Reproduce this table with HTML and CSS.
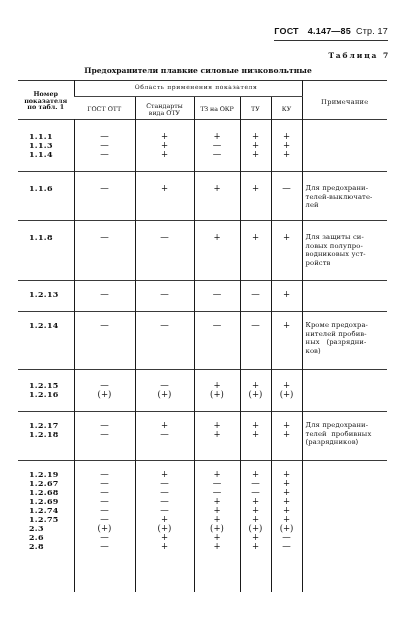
FILE: index.html
```html
<!DOCTYPE html>
<html lang="ru">
<head>
<meta charset="utf-8">
<title>ГОСТ 4.147—85 Стр. 17</title>
<link rel="stylesheet" href="styles.css">
</head>
<body>
<div class="page">
  <header class="running-head"><span class="head-text"><b>ГОСТ</b><b class="gost-no">4.147—85</b><span class="pg">Стр. 17</span></span></header>
  <div class="table-no">Таблица 7</div>
  <h1 class="caption">Предохранители плавкие силовые низковольтные</h1>
  <table class="spec">
    <colgroup>
      <col class="c-num"><col class="c-gost"><col class="c-std"><col class="c-tz"><col class="c-tu"><col class="c-ku"><col class="c-note">
    </colgroup>
    <thead>
      <tr class="hr1">
        <th rowspan="2" class="h-num">Номер<br>показателя<br>по табл. 1</th>
        <th colspan="5" class="h-area">Область применения показателя</th>
        <th rowspan="2" class="h-note">Примечание</th>
      </tr>
      <tr class="hr2">
        <th>ГОСТ ОТТ</th>
        <th>Стандарты<br>вида ОТУ</th>
        <th class="h-tz">ТЗ на ОКР</th>
        <th>ТУ</th>
        <th>КУ</th>
      </tr>
    </thead>
    <tbody>
      <tr class="r1">
        <td class="num">1.1.1<br>1.1.3<br>1.1.4</td>
        <td class="sym">—<br>—<br>—</td>
        <td class="sym">+<br>+<br>+</td>
        <td class="sym">+<br>—<br>—</td>
        <td class="sym">+<br>+<br>+</td>
        <td class="sym">+<br>+<br>+</td>
        <td class="note"></td>
      </tr>
      <tr class="r2">
        <td class="num">1.1.6</td>
        <td class="sym">—</td>
        <td class="sym">+</td>
        <td class="sym">+</td>
        <td class="sym">+</td>
        <td class="sym">—</td>
        <td class="note">Для предохрани-<br>телей-выключате-<br>лей</td>
      </tr>
      <tr class="r3">
        <td class="num">1.1.8</td>
        <td class="sym">—</td>
        <td class="sym">—</td>
        <td class="sym">+</td>
        <td class="sym">+</td>
        <td class="sym">+</td>
        <td class="note">Для защиты си-<br>ловых полупро-<br>водниковых уст-<br>ройств</td>
      </tr>
      <tr class="r4">
        <td class="num">1.2.13</td>
        <td class="sym">—</td>
        <td class="sym">—</td>
        <td class="sym">—</td>
        <td class="sym">—</td>
        <td class="sym">+</td>
        <td class="note"></td>
      </tr>
      <tr class="r5">
        <td class="num">1.2.14</td>
        <td class="sym">—</td>
        <td class="sym">—</td>
        <td class="sym">—</td>
        <td class="sym">—</td>
        <td class="sym">+</td>
        <td class="note">Кроме предохра-<br>нителей пробив-<br>ных&nbsp;&nbsp;&nbsp;(разрядни-<br>ков)</td>
      </tr>
      <tr class="r6">
        <td class="num">1.2.15<br>1.2.16</td>
        <td class="sym">—<br>(+)</td>
        <td class="sym">—<br>(+)</td>
        <td class="sym">+<br>(+)</td>
        <td class="sym">+<br>(+)</td>
        <td class="sym">+<br>(+)</td>
        <td class="note"></td>
      </tr>
      <tr class="r7">
        <td class="num">1.2.17<br>1.2.18</td>
        <td class="sym">—<br>—</td>
        <td class="sym">+<br>—</td>
        <td class="sym">+<br>+</td>
        <td class="sym">+<br>+</td>
        <td class="sym">+<br>+</td>
        <td class="note">Для предохрани-<br>телей&nbsp;&nbsp;пробивных<br>(разрядников)</td>
      </tr>
      <tr class="r8">
        <td class="num">1.2.19<br>1.2.67<br>1.2.68<br>1.2.69<br>1.2.74<br>1.2.75<br>2.3<br>2.6<br>2.8</td>
        <td class="sym">—<br>—<br>—<br>—<br>—<br>—<br>(+)<br>—<br>—</td>
        <td class="sym">+<br>—<br>—<br>—<br>—<br>+<br>(+)<br>+<br>+</td>
        <td class="sym">+<br>—<br>—<br>+<br>+<br>+<br>(+)<br>+<br>+</td>
        <td class="sym">+<br>—<br>—<br>+<br>+<br>+<br>(+)<br>+<br>+</td>
        <td class="sym">+<br>+<br>+<br>+<br>+<br>+<br>(+)<br>—<br>—</td>
        <td class="note"></td>
      </tr>
    </tbody>
  </table>
</div>
</body>
</html>
```
FILE: styles.css
```css
html, body {
  margin: 0;
  padding: 0;
  background: #fff;
}
body {
  width: 405px;
  height: 628px;
  overflow: hidden;
  color: #111;
  font-family: "DejaVu Serif", "Liberation Serif", serif;
}
.page {
  padding: 0 17px 0 18px;
  filter: grayscale(100%);
  background: #fff;
}
.running-head {
  display: flex;
  justify-content: flex-end;
  padding-top: 26px;
}
.head-text {
  font-family: "Liberation Sans", Arial, sans-serif;
  font-size: 9px;
  line-height: 10px;
  padding-bottom: 4px;
  border-bottom: 1px solid #333;
  letter-spacing: 0.2px;
}
.head-text b { font-weight: bold; }
.gost-no { margin-left: 9px; }
.pg { margin-left: 5px; }
.table-no {
  margin-top: 10px;
  text-align: right;
  font-size: 7.5px;
  line-height: 10px;
  font-weight: bold;
  letter-spacing: 1.9px;
  margin-right: -2px;
}
.caption {
  margin: 5px 0 4px;
  text-align: center;
  font-size: 7.6px;
  line-height: 10px;
  font-weight: bold;
  padding-right: 10px;
}
.spec {
  width: 369px;
  table-layout: fixed;
  border-collapse: collapse;
  border-top: 1px solid #333;
}
.c-num { width: 56px; }
.c-gost { width: 61px; }
.c-std { width: 59px; }
.c-tz { width: 46px; }
.c-tu { width: 31px; }
.c-ku { width: 31px; }
.c-note { width: 85px; }
.spec th, .spec td {
  padding: 0;
  border-left: 1.5px solid #1a1a1a;
}
.spec th:first-child, .spec td:first-child { border-left: 0; }
.spec th {
  font-weight: normal;
  font-size: 6.2px;
  line-height: 6.5px;
  vertical-align: middle;
  text-align: center;
}
.hr1 { height: 16px; }
.hr2 { height: 23px; }
.spec .h-num { font-weight: bold; font-size: 6.4px; line-height: 6.5px; padding-top: 2px; }
.hr1 th.h-num { border-left: 0; }
.spec .h-area {
  border-bottom: 1px solid #444;
  letter-spacing: 0.6px;
  font-size: 6px;
  padding: 0 0 2px 16px;
}
.spec .h-note { font-size: 6.6px; letter-spacing: 0.3px; padding-top: 4px; }
.spec .hr2 th { font-size: 6.3px; line-height: 6.5px; padding-top: 3px; }
.spec .hr2 .h-tz { letter-spacing: -0.1px; }
.spec tbody tr { border-top: 1px solid #3a3a3a; }
.spec td {
  vertical-align: top;
  padding-top: 11px;
}
.spec .num {
  padding-left: 11px;
  font-size: 8px;
  line-height: 9px;
  font-weight: bold;
  letter-spacing: 0.3px;
}
.spec .sym {
  text-align: center;
  font-family: "DejaVu Serif", serif;
  font-size: 8.5px;
  line-height: 9px;
}
.spec .note {
  padding-left: 3px;
  font-size: 6.8px;
  line-height: 8.5px;
  white-space: nowrap;
  letter-spacing: 0.1px;
}
.r1 { height: 52px; }
.spec .r1 td { padding-top: 12px; }
.r2 { height: 49px; }
.spec .r2 td { padding-top: 12px; }
.r3 { height: 60px; }
.spec .r3 td { padding-top: 12px; }
.r4 { height: 31px; }
.spec .r4 td { padding-top: 9px; }
.r5 { height: 58px; }
.spec .r5 td { padding-top: 9px; }
.r6 { height: 42px; }
.spec .r6 td { padding-top: 11px; }
.r7 { height: 49px; }
.spec .r7 td { padding-top: 9px; }
.r8 { height: 131px; }
.spec .r8 td { padding-top: 9px; }
```
